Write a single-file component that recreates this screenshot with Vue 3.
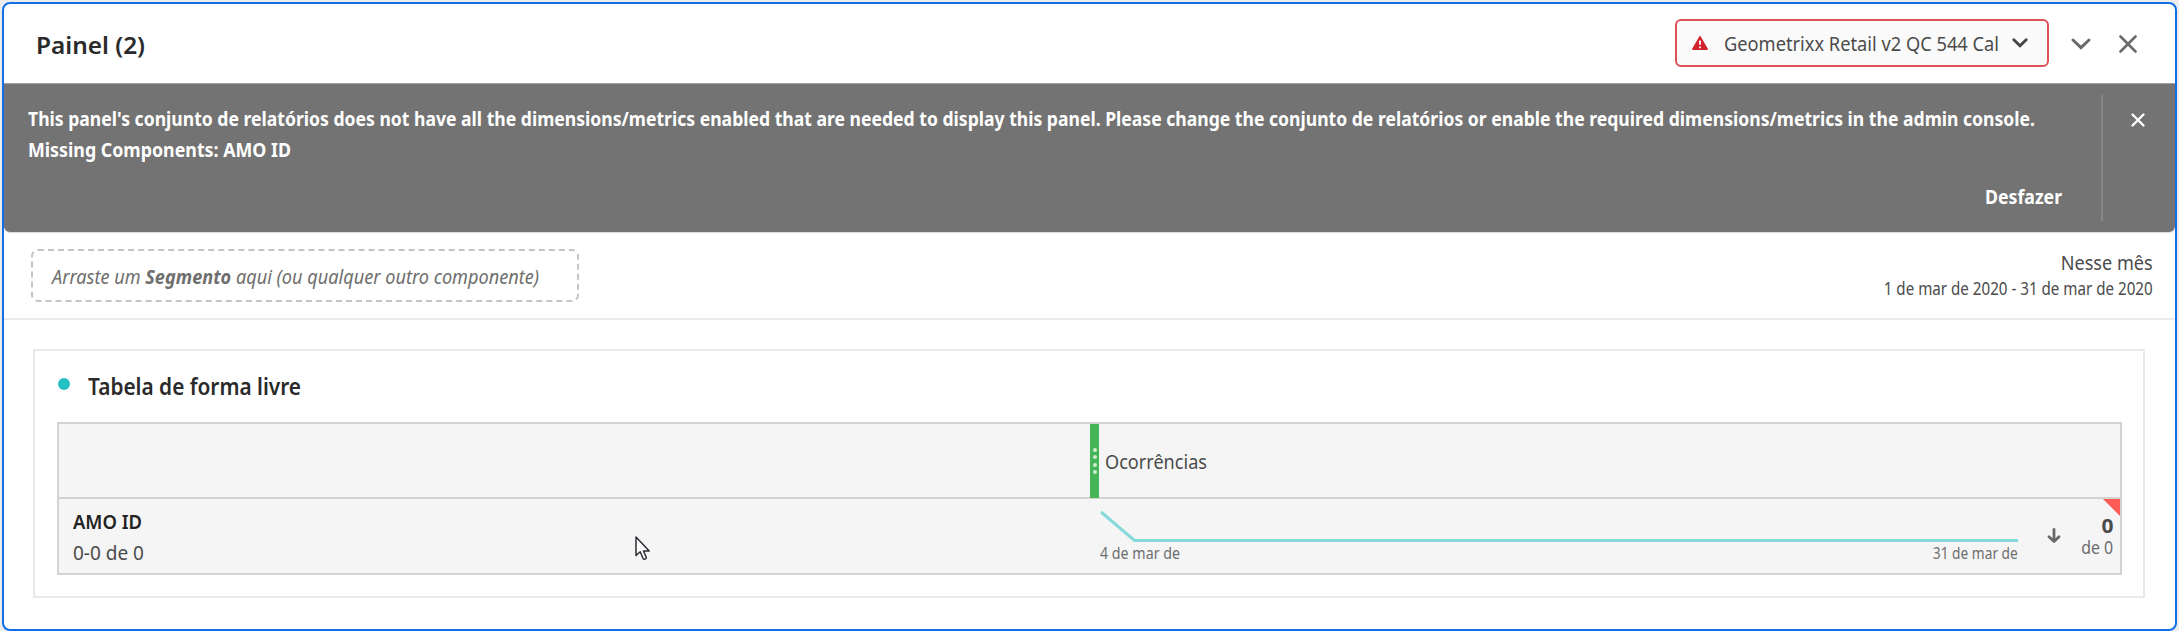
<script setup>
// Condenses a single line of text horizontally so it occupies the given width.
const vFit = {
  mounted(el, { value }) {
    const natural = el.getBoundingClientRect().width
    if (natural) el.style.transform = `scaleX(${value / natural})`
  },
}
</script>

<template>
  <section class="panel">
    <header class="head">
      <h1 v-fit="109" class="t title">Painel (2)</h1>
      <div class="tools">
        <button class="suite">
          <svg class="warn" width="16" height="14" viewBox="0 0 16 14">
            <path d="M7.3 .5Q8 -.5 8.7 .5L15.8 12.7Q16.2 14 15 14H1Q-.2 14 .2 12.7Z" fill="#d0222a" />
            <path d="M8 4.4V8.8M8 10.4V12.2" stroke="#fff" stroke-width="1.8" />
          </svg>
          <span class="suite-name"><span v-fit="275" class="t">Geometrixx Retail v2 QC 544 Cal</span></span>
          <svg width="16" height="10" viewBox="0 0 16 10">
            <path d="M1.8 1.8L8 7.8L14.2 1.8" fill="none" stroke="#444" stroke-width="2.8" stroke-linecap="round" />
          </svg>
        </button>
        <svg class="collapse" width="20" height="12" viewBox="0 0 20 12">
          <path d="M2 2L10 9.6L18 2" fill="none" stroke="#6a6a6a" stroke-width="3" stroke-linecap="round" />
        </svg>
        <svg class="close" width="18" height="18" viewBox="0 0 18 18">
          <path d="M1.5 1.5L16.5 16.5M16.5 1.5L1.5 16.5" stroke="#6a6a6a" stroke-width="2.6" stroke-linecap="round" />
        </svg>
      </div>
    </header>

    <div class="alert">
      <div class="alert-body">
        <div><span v-fit="2007" class="t">This panel's conjunto de relatórios does not have all the dimensions/metrics enabled that are needed to display this panel. Please change the conjunto de relatórios or enable the required dimensions/metrics in the admin console.</span></div>
        <div><span v-fit="263" class="t">Missing Components: AMO ID</span></div>
        <div class="undo"><span v-fit="77" class="t right">Desfazer</span></div>
      </div>
      <div class="alert-close">
        <svg width="14" height="14" viewBox="0 0 14 14">
          <path d="M1.5 1.5L12.5 12.5M12.5 1.5L1.5 12.5" stroke="#fff" stroke-width="2.3" stroke-linecap="round" />
        </svg>
      </div>
    </div>

    <div class="filters">
      <div class="drop"><span v-fit="487" class="t">Arraste um <b>Segmento</b> aqui (ou qualquer outro componente)</span></div>
      <div class="dates">
        <div class="range"><span v-fit="92" class="t right">Nesse mês</span></div>
        <div class="days"><span v-fit="269" class="t right">1 de mar de 2020 - 31 de mar de 2020</span></div>
      </div>
    </div>

    <article class="card">
      <div class="card-head">
        <i class="dot"></i>
        <h2 v-fit="213" class="t">Tabela de forma livre</h2>
      </div>
      <div class="table">
        <div class="row columns">
          <div class="first"></div>
          <div class="metric">
            <span class="grip"><i></i><i></i><i></i><i></i></span>
            <span v-fit="102" class="t">Ocorrências</span>
          </div>
        </div>
        <div class="row summary">
          <div class="first dim">
            <div><b v-fit="69" class="t">AMO ID</b></div>
            <div><span v-fit="71" class="t">0-0 de 0</span></div>
            <svg class="cursor" width="16" height="25" viewBox="0 0 16 25">
              <path d="M1 1V19.5L5.2 15.7L8 22.3Q9 24 11 22.5L11.3 21.5L8.5 15H14.2Z" fill="#fff" stroke="#2b2b33" stroke-width="1.5" stroke-linejoin="round" />
            </svg>
          </div>
          <div class="trend">
            <svg width="918" height="34" viewBox="0 0 918 34">
              <path d="M1 2L34.5 30.5H918" fill="none" stroke="#86dadc" stroke-width="3" />
            </svg>
            <div class="axis">
              <span v-fit="80" class="t">4 de mar de</span>
              <span v-fit="85" class="t right">31 de mar de</span>
            </div>
          </div>
          <svg class="sort" width="14" height="16" viewBox="0 0 14 16">
            <path d="M7 1.5V13M2 8.8L7 13.6L12 8.8" fill="none" stroke="#6a6a6a" stroke-width="2.8" stroke-linecap="round" stroke-linejoin="round" />
          </svg>
          <div class="total">
            <div class="sum"><b v-fit="12" class="t right">0</b></div>
            <div class="of"><span v-fit="32" class="t right">de 0</span></div>
          </div>
          <i class="flag"></i>
        </div>
      </div>
    </article>
  </section>
</template>

<style>
body {
  background: #ececec;
}
</style>

<style scoped>
.panel {
  box-sizing: border-box;
  width: 2175px;
  height: 629px;
  margin: 2px 2px 0;
  border: 2px solid #0f6fe8;
  border-radius: 8px;
  background: #fff;
  font: 450 20px "Noto Sans", "Open Sans", sans-serif;
  color: #4b4b4b;
  display: flex;
  flex-direction: column;
  overflow: hidden;
}
.panel * {
  box-sizing: border-box;
}
svg {
  display: block;
  flex: none;
}
.t {
  display: inline-block;
  flex: none;
  white-space: nowrap;
  transform-origin: 0 50%;
}
.right {
  transform-origin: 100% 50%;
}
h1,
h2 {
  margin: 0;
  font-weight: 600;
  color: #2a2a2a;
}
.head {
  flex: none;
  height: 80px;
  padding: 0 38px 0 32px;
  border-bottom: 1px solid #a0a0a0;
  display: flex;
  align-items: center;
  justify-content: space-between;
}
.title {
  padding-top: 1px;
  font-size: 24px;
}
.tools {
  display: flex;
  align-items: center;
}
.suite {
  width: 374px;
  height: 48px;
  margin: 0 22px 1px 0;
  padding: 0 0 0 15px;
  border: 2px solid #de5159;
  border-radius: 6px;
  background: #fafafa;
  font: inherit;
  color: #4b4b4b;
  display: flex;
  align-items: center;
}
.suite-name {
  width: 288px;
  margin-left: 16px;
  text-align: left;
}
.collapse {
  margin-right: 28px;
}
.alert {
  flex: none;
  height: 148px;
  border-radius: 0 0 6px 6px;
  background: #737373;
  box-shadow: 0 1px 1px #d8d8d8;
  color: #fff;
  font-weight: 700;
  line-height: 31px;
  display: flex;
}
.alert-body {
  width: 2097px;
  padding: 19px 39px 0 24px;
}
.undo {
  margin-top: 16px;
  text-align: right;
}
.alert-close {
  flex: 1;
  margin: 11px 0;
  padding: 18px 0 0 28px;
  border-left: 2px solid #868686;
}
.filters {
  flex: none;
  height: 88px;
  padding: 17px 22px 0 27px;
  border-bottom: 2px solid #ebebeb;
  display: flex;
  justify-content: space-between;
}
.drop {
  width: 548px;
  height: 53px;
  padding-left: 19px;
  border: 2px dashed #c4c4c4;
  border-radius: 7px;
  color: #6e6e6e;
  font-style: italic;
  line-height: 51px;
}
.drop b {
  font-weight: 700;
}
.dates {
  padding-top: 1px;
  display: flex;
  flex-direction: column;
  align-items: flex-end;
}
.range {
  line-height: 26px;
}
.days {
  padding-top: 1px;
  font-size: 17.3px;
  line-height: 24px;
}
.card {
  width: 2112px;
  height: 249px;
  margin: 29px 0 0 29px;
  padding: 0 21px 0 22px;
  border: 2px solid #e9e9e9;
}
.card-head {
  height: 71px;
  padding-bottom: 2px;
  display: flex;
  align-items: center;
}
.dot {
  width: 12px;
  height: 12px;
  margin: -4px 18px 0 1px;
  border-radius: 50%;
  background: #26c0c7;
}
h2 {
  font-size: 23px;
}
.table {
  width: 2065px;
  height: 153px;
  border: 2px solid #d3d3d3;
  background: #f5f5f5;
}
.row {
  display: flex;
}
.columns {
  height: 75px;
  border-bottom: 2px solid #d3d3d3;
}
.first {
  width: 1031px;
}
.metric {
  flex: 1;
  padding-top: 1px;
  display: flex;
  align-items: center;
  gap: 6px;
}
.grip {
  width: 9px;
  height: 74px;
  margin-top: -1px;
  align-self: flex-start;
  background: #46b557;
  display: flex;
  flex-direction: column;
  align-items: center;
  justify-content: center;
  gap: 3.4px;
}
.grip i {
  width: 4px;
  height: 4px;
  border-radius: 50%;
  background: #cfecd3;
}
.summary {
  position: relative;
  height: 74px;
}
.dim {
  position: relative;
  padding: 7px 0 0 14px;
  line-height: 31px;
}
.dim b {
  font-weight: 600;
  color: #222;
}
.cursor {
  position: absolute;
  left: 576px;
  top: 37px;
}
.trend {
  width: 918px;
  margin-left: 10px;
  padding-top: 11px;
}
.axis {
  margin-top: -1px;
  display: flex;
  justify-content: space-between;
  font-size: 15.8px;
  line-height: 20px;
  color: #6e6e6e;
}
.sort {
  margin: 29px 0 0 29px;
}
.total {
  width: 52px;
  padding-top: 14px;
  text-align: right;
}
.total b {
  font-weight: 700;
}
.sum {
  line-height: 25px;
}
.of {
  font-size: 17.5px;
  line-height: 18px;
  color: #6e6e6e;
}
.flag {
  position: absolute;
  right: 0;
  top: 0;
  width: 17px;
  height: 17px;
  background: #fd5b55;
  clip-path: polygon(0 0, 100% 0, 100% 100%);
}
</style>
